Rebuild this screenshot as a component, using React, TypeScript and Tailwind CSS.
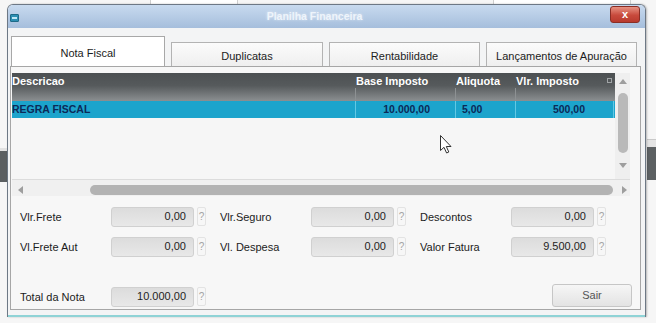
import React from "react";

const Q = () => (
  <div className="ml-[3px] w-[9px] h-[19px] flex items-center justify-center border border-[#e3e3e3] rounded-[2px] text-[10px] leading-none text-[#a4a4a4]">
    ?
  </div>
);

const Field = ({ label, value }: { label: string; value: string }) => (
  <div className="flex items-start w-[200px]">
    <div className="w-[91px] pt-[4px] leading-[13px] text-[11px] text-[#1c1c1c]">{label}</div>
    <div className="w-[83px] h-[20px] flex items-center justify-end pr-[7px] pb-[1px] text-[11px] text-[#1e1e1e] border border-[#d0d0d0] rounded-[3px] bg-[linear-gradient(to_bottom,#dcdcdc,#e8e8e8)]">
      {value}
    </div>
    <Q />
  </div>
);

const HeadCell = ({ w, label }: { w: string; label: string }) => (
  <div className={`flex flex-col h-full ${w}`}>
    <div className="h-[15px] pl-[1px] pt-[1px] leading-[14px] whitespace-nowrap">{label}</div>
    <div className="flex-1 border-l border-[#8d9193]" />
  </div>
);

export default function App() {
  return (
    <div className="relative w-[656px] h-[323px] overflow-hidden bg-[#f6f6f6] font-['Liberation_Sans',Arial,sans-serif]">
      {/* background windows behind */}
      <div className="absolute left-[150px] top-0 w-[88px] h-[6px] border border-t-0 border-[#cfcfcf] bg-white" />
      <div className="absolute left-[493px] top-0 w-[138px] h-[6px] border border-t-0 border-[#cfcfcf] bg-white" />
      <div className="absolute left-0 top-[148px] w-[7px] h-[3px] bg-[#e2e2e2]" />
      <div className="absolute left-0 top-[151px] w-[7px] h-[31px] bg-[#5b5f61]" />
      <div className="absolute left-[647px] top-[139px] w-[9px] h-[8px] bg-[#e4e4e4] border-t border-[#c9c9c9]" />
      <div className="absolute left-[647px] top-[147px] w-[9px] h-[33px] bg-[#5c6062]" />

      {/* window */}
      <div className="absolute left-[7px] top-[4px] w-[639px] flex flex-col border border-b-0 border-[#6d7885] rounded-t-[6px] overflow-hidden shadow-[1px_0_2px_rgba(0,0,0,0.25)]">
        {/* title bar */}
        <div className="relative h-[23px] flex items-center bg-[linear-gradient(to_bottom,#c8daef,#a5bedc)]">
          <div className="ml-[2px] mt-[3px] w-[9px] h-[8px] rounded-[1px] bg-[#2c8fb3] border border-[#1d6a88] flex items-center justify-center">
            <div className="w-[5px] h-[2px] bg-[#bfe7f5]" />
          </div>
          <div className="flex-1 text-center text-[10.5px] font-bold text-[#eef4fb] [text-shadow:0_0_3px_rgba(255,255,255,0.6)]">
            Planilha Financeira
          </div>
          <div className="mr-[5px] mt-[-4px] w-[30px] h-[17px] rounded-[3px] border border-[#8a2e25] bg-[linear-gradient(to_bottom,#e79282,#c84a3c_55%,#b83a2e)] flex items-center justify-center text-white text-[11px] font-bold leading-none">
            x
          </div>
        </div>

        {/* body */}
        <div className="flex flex-col bg-[#f3f4f5] pl-[2px] pr-[4px] pt-[8px] pb-[5px] border-b-[2px] border-[#8fd3d6]">
          {/* tabs */}
          <div className="h-[30px] flex items-end pl-[1px] gap-[6px] text-[11px] text-[#1c1c1c]">
            <div className="w-[154px] h-[30px] bg-white border border-b-0 border-[#a8a8a8] flex items-center justify-center pt-[4px]">
              Nota Fiscal
            </div>
            <div className="w-[152px] h-[24px] bg-[linear-gradient(to_bottom,#fbfbfb,#efefef)] border border-b-0 border-[#b3b3b3] flex items-center justify-center pt-[3px]">
              Duplicatas
            </div>
            <div className="w-[151px] h-[24px] bg-[linear-gradient(to_bottom,#fbfbfb,#efefef)] border border-b-0 border-[#b3b3b3] flex items-center justify-center pt-[3px]">
              Rentabilidade
            </div>
            <div className="w-[151px] h-[24px] bg-[linear-gradient(to_bottom,#fbfbfb,#efefef)] border border-b-0 border-[#b3b3b3] flex items-center justify-center pt-[3px] whitespace-nowrap">
              Lançamentos de Apuração
            </div>
          </div>

          {/* panel */}
          <div className="w-[631px] h-[244px] border border-[#a6a6a6] bg-[#f7f7f7] flex flex-col">
            {/* grid */}
            <div className="ml-[1px] mt-[6px] w-[618px] flex flex-col">
              <div className="flex h-[106px]">
                <div className="w-[603px] h-full flex flex-col overflow-hidden bg-[#f6f6f6]">
                  <div className="flex h-[28px] shrink-0 text-white font-bold text-[11px] bg-[linear-gradient(to_bottom,#4c5052_0%,#565a5c_45%,#8b8f91_100%)]">
                    <div className="w-[343px]">
                      <div className="pt-[1px] leading-[14px] whitespace-nowrap">Descricao</div>
                    </div>
                    <HeadCell w="w-[100px]" label="Base Imposto" />
                    <HeadCell w="w-[60px]" label="Aliquota" />
                    <div className="flex flex-col h-full w-[99px]">
                      <div className="h-[15px] pl-[1px] pt-[1px] leading-[14px] whitespace-nowrap flex">
                        <span>Vlr. Imposto</span>
                        <span className="ml-auto mr-[2px] mt-[4px] w-[5px] h-[5px] border border-[#a0a4a6]" />
                      </div>
                      <div className="flex-1 border-l border-[#8d9193]" />
                    </div>
                  </div>
                  <div className="flex h-[17px] shrink-0 bg-[#1ca4cc] text-[#0b2a58] font-bold text-[10.5px] leading-[17px]">
                    <div className="w-[343px]">
                      <div className="whitespace-nowrap">REGRA FISCAL</div>
                    </div>
                    <div className="w-[100px] border-l border-[#63c8e4] text-right pr-[25px]">10.000,00</div>
                    <div className="w-[60px] border-l border-[#63c8e4] pl-[6px]">5,00</div>
                    <div className="w-[99px] border-l border-r border-[#63c8e4] text-right pr-[28px]">500,00</div>
                  </div>
                </div>
                {/* vertical scrollbar */}
                <div className="w-[15px] h-full bg-[#efefef] flex flex-col items-center pl-[1px] pt-[6px]">
                  <div className="w-0 h-0 border-l-[4px] border-r-[4px] border-b-[5px] border-l-transparent border-r-transparent border-b-[#9e9e9e]" />
                  <div className="mt-[9px] w-[10px] h-[60px] rounded-full bg-[#b9b9b9]" />
                  <div className="mt-[10px] w-0 h-0 border-l-[4px] border-r-[4px] border-t-[5px] border-l-transparent border-r-transparent border-t-[#9e9e9e]" />
                </div>
              </div>
              {/* horizontal scrollbar */}
              <div className="h-[17px] border-t border-[#dcdcdc] bg-[#f0f0f0] flex items-center pl-[6px] pt-[3px]">
                <div className="w-0 h-0 border-t-[4px] border-b-[4px] border-r-[5px] border-t-transparent border-b-transparent border-r-[#9e9e9e]" />
                <div className="ml-[67px] w-[523px] h-[10px] rounded-full bg-[#b3b3b3]" />
                <div className="ml-[9px] w-0 h-0 border-t-[4px] border-b-[4px] border-l-[5px] border-t-transparent border-b-transparent border-l-[#9e9e9e]" />
              </div>
            </div>

            {/* form */}
            <div className="flex flex-col pl-[9px] pr-[8px] mt-[11px]">
              <div className="flex">
                <Field label="Vlr.Frete" value="0,00" />
                <Field label="Vlr.Seguro" value="0,00" />
                <Field label="Descontos" value="0,00" />
              </div>
              <div className="flex mt-[10px]">
                <Field label="Vl.Frete Aut" value="0,00" />
                <Field label="Vl. Despesa" value="0,00" />
                <Field label="Valor Fatura" value="9.500,00" />
              </div>
              <div className="flex items-end mt-[27px]">
                <Field label="Total da Nota" value="10.000,00" />
                <div className="ml-auto w-[80px] h-[23px] rounded-[3px] border border-[#c6c6c6] bg-[linear-gradient(to_bottom,#f6f6f6,#e3e3e3)] flex items-center justify-center text-[11px] text-[#555]">
                  Sair
                </div>
              </div>
            </div>
          </div>
        </div>
      </div>

      {/* mouse cursor */}
      <svg className="absolute left-[440px] top-[135px]" width="13" height="19" viewBox="0 0 13 19">
        <path d="M0.5 0.5 L0.5 15.5 L4 12.3 L6.6 18 L8.8 17 L6.3 11.5 L11 11.5 Z" fill="#ffffff" stroke="#333" strokeWidth="1" strokeLinejoin="round" />
      </svg>
    </div>
  );
}
